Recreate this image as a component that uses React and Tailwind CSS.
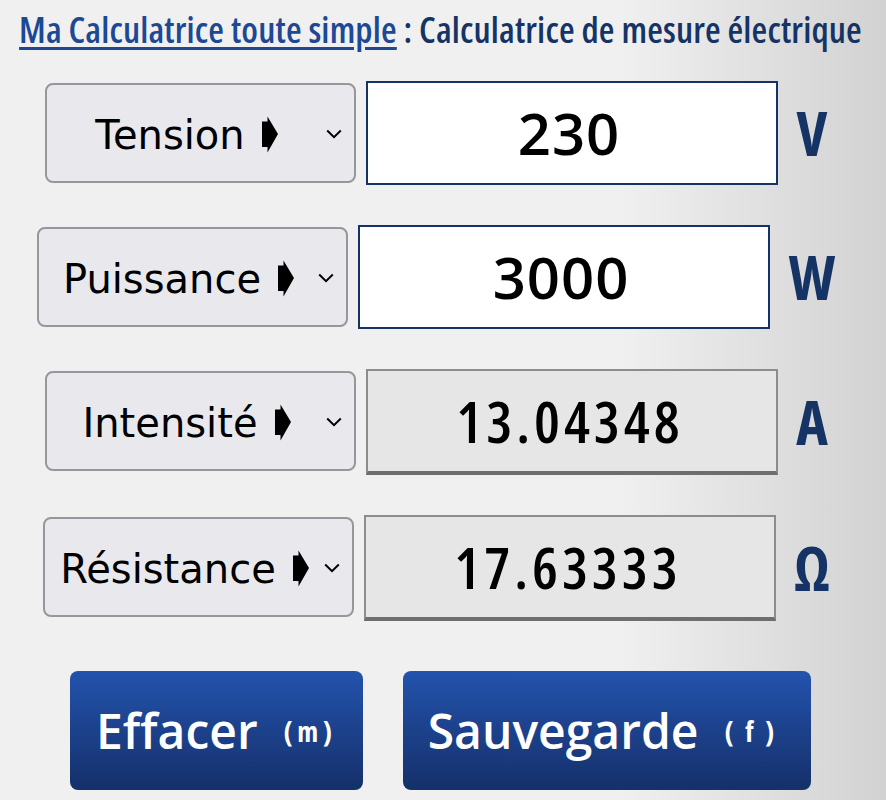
import React from "react";

const sans = "font-['Open_Sans',sans-serif]";

const rows = [
  { label: "Tension", value: "230", unit: "V", unitWidth: "w-[28px]", result: false },
  { label: "Puissance", value: "3000", unit: "W", unitWidth: "w-[44px]", result: false },
  { label: "Intensité", value: "13.04348", unit: "A", unitWidth: "w-[28px]", result: true },
  { label: "Résistance", value: "17.63333", unit: "Ω", unitWidth: "w-[32px]", result: true },
];

const Chevron = () => (
  <svg width="16" height="10" viewBox="0 0 16 10" className="mt-[2px] shrink-0">
    <path d="M1.2 1.5 L8 8.2 L14.8 1.5" fill="none" stroke="#000" strokeWidth="2" />
  </svg>
);

const Arrow = () => (
  <svg width="17" height="37" viewBox="0 0 17 37" className="ml-[16px] shrink-0">
    <path d="M1 5.5 H6.5 V0.5 L17 18 L6.5 36.5 V31 H1 Z" fill="#000" />
  </svg>
);

const Row = ({ label, value, unit, unitWidth, result }) => (
  <div className="flex items-start justify-center">
    <div className="mt-[2px] flex h-[100px] w-[311px] items-center rounded-[8px] border-2 border-[#96969c] bg-[#e9e9ed] pr-[12px] text-black">
      <div className="flex flex-1 items-center justify-center pt-[3px]">
        <span className="whitespace-nowrap font-['DejaVu_Sans',sans-serif] text-[40px] leading-none [font-stretch:100%]">
          {label}
        </span>
        <Arrow />
      </div>
      <Chevron />
    </div>
    <input
      readOnly
      value={value}
      className={`ml-[10px] w-[412px] border-2 pb-[2px] text-center text-[58px] font-semibold text-black outline-none ${sans} ${
        result
          ? "h-[106px] border-[#8c8c8c] border-b-[4px] border-b-[#6e6e6e] bg-[#e6e6e6] pr-[4px] tracking-[4px] [font-stretch:75%]"
          : "h-[104px] border-[#153465] bg-white pr-[6px] tracking-[1px] [font-stretch:100%]"
      }`}
    />
    <span
      className={`ml-[20px] flex justify-center self-center text-[60px] leading-none font-bold text-[#153465] [font-stretch:75%] ${unitWidth} ${sans}`}
    >
      {unit}
    </span>
  </div>
);

const App = () => {
  return (
    <div className={`h-[800px] w-[886px] overflow-hidden bg-gradient-to-r from-[#f0f0f1] via-[#f0f0f1] via-70% to-[#d2d2d2] pt-[6px] ${sans}`}>
      <h1 className="h-[48px] whitespace-nowrap pr-[5px] text-center text-[36px] leading-[48px] font-semibold tracking-[0.15px] text-[#153465] [font-stretch:75%]">
        <a href="#" className="text-[#1d4894] underline underline-offset-4">
          Ma Calculatrice toute simple
        </a>{" "}
        : Calculatrice de mesure électrique
      </h1>
      <div className="mt-[27px] flex flex-col gap-[40px] pr-[15px]">
        {rows.map((row) => (
          <Row key={row.label} {...row} />
        ))}
      </div>
      <div className="mt-[50px] flex justify-center gap-[40px] pr-[5px]">
        <button className="flex h-[119px] w-[293px] items-center justify-center gap-[26px] rounded-[8px] bg-gradient-to-b from-[#2353ae] to-[#15306a] text-white">
          <span className="text-[48px] font-semibold [font-stretch:100%]">Effacer</span>
          <span className="text-[28px] font-bold tracking-[5px] [font-stretch:75%]">(m)</span>
        </button>
        <button className="flex h-[119px] w-[408px] items-center justify-center gap-[26px] rounded-[8px] bg-gradient-to-b from-[#2353ae] to-[#15306a] text-white">
          <span className="text-[48px] font-semibold [font-stretch:100%]">Sauvegarde</span>
          <span className="text-[28px] font-bold tracking-[12px] [font-stretch:75%]">(f)</span>
        </button>
      </div>
    </div>
  );
};

export default App;
